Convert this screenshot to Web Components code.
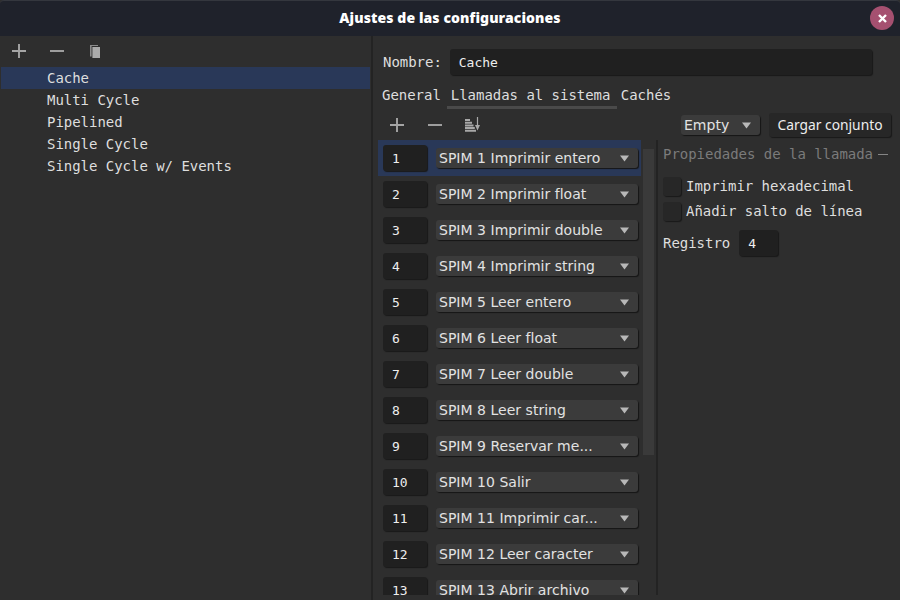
<!DOCTYPE html>
<html lang="es"><head><meta charset="utf-8"><title>Ajustes de las configuraciones</title>
<style>html,body{margin:0;background:#2e2e2e}</style></head><body>
<settings-window></settings-window>
<script>
const base = `*{box-sizing:border-box}`;
function define(name, html) {
  customElements.define(name, class extends HTMLElement {
    constructor() {
      super();
      const t = document.createElement('template');
      t.innerHTML = typeof html === 'function' ? html(this) : html;
      this.attachShadow({mode: 'open'}).append(t.content.cloneNode(true));
    }
  });
}
const icons = {
  plus: '<path d="M7 0V14M0 7H14" stroke="#a5a5a5" stroke-width="1.9"/>',
  minus: '<path d="M0 7H14" stroke="#a5a5a5" stroke-width="1.9"/>',
  copy: '<path d="M2 1H10V2H3.6V12.5H2Z" fill="#8c8c8c"/><rect x="4.4" y="3" width="7.6" height="11" fill="#ababab"/>',
  sort: '<path d="M0 2H5V4H0ZM0 4.7H7V6.7H0ZM0 7.4H8.5V9.4H0ZM0 10.1H9.8V12.1H0ZM0 12.8H11V14.8H0Z" fill="#a8a8a8"/><path d="M12.5 0V10" stroke="#a8a8a8" stroke-width="1.2"/><path d="M10 8H15L12.5 13.5Z" fill="#a8a8a8"/>',
  close: '<path d="M1 1 8 8M8 1 1 8" stroke="#fff" stroke-width="2.4" fill="none"/>'
};
define('ui-icon', el => {
  const n = el.getAttribute('name'), s = n === 'close' ? 9 : n === 'sort' ? 16 : 14;
  return `<style>:host{display:block;width:${s}px;height:${s}px;flex:none}svg{display:block}</style><svg width="${s}" height="${s}" viewBox="0 0 ${s} ${s}">${icons[n]}</svg>`;
});
define('title-bar', `<style>${base}:host{display:grid;grid-template-columns:36px 1fr 36px;align-items:center;height:36px;flex:none;background:#1f222b;border-top:1px solid #34373e;border-radius:4px 4px 0 0;color:#fff;font:bold 14px/20px "Noto Sans",sans-serif;letter-spacing:.09px}
b{grid-column:2;text-align:center;margin-top:-1px}i{display:grid;place-items:center;width:24px;height:24px;border-radius:50%;background:#a55070;margin:-1px 0 0 6px}</style><b><slot></slot></b><i><ui-icon name="close"></ui-icon></i>`);
define('tree-item', `<style>${base}:host{display:block;height:22px;line-height:22px;padding-left:46px;white-space:pre}:host([selected]){background:#293858}</style><slot></slot>`);
define('config-list', `<style>${base}:host{display:flex;flex-direction:column;width:371px;flex:none;padding:0 1px}
nav{display:flex;gap:24px;padding:8px 0 0 11px;height:31px}</style><nav><ui-icon name="plus"></ui-icon><ui-icon name="minus"></ui-icon><ui-icon name="copy"></ui-icon></nav><slot></slot>`);
define('text-field', `<style>${base}:host{display:block;flex:none;height:26px;line-height:27px;padding-left:9px;background:#202020;border-radius:3px;box-shadow:1px 1px 1px #191919;font-size:13px;letter-spacing:-.026px;color:#eee}</style><slot></slot>`);
define('combo-box', `<style>${base}:host{display:flex;flex:none;align-items:center;height:20px;padding:0 9px 0 3px;background:#3b3b3b;border-radius:3px;box-shadow:1px 1px 1px #161616;font:14px/20px "DejaVu Sans",sans-serif;letter-spacing:.02px;color:#e2e2e2;white-space:pre}
span{flex:1}svg{flex:none;margin-top:1px}</style><span><slot></slot></span><svg width="9" height="7"><path d="M0 .5H9L4.5 6.5Z" fill="#b8b8b8"/></svg>`);
define('call-row', el => `<style>${base}:host{display:flex;height:36px;flex:none;padding:5px 0 0 5px}:host([selected]){background:#293858}
text-field{width:44px;margin-right:9px}combo-box{width:202px;margin-top:3px}</style><text-field>${el.getAttribute('n')}</text-field><combo-box><slot></slot></combo-box>`);
define('check-item', `<style>${base}:host{display:flex;align-items:center;height:19px;gap:5px;line-height:19px;white-space:pre}i{width:18px;height:19px;background:#272727;border-radius:3px;box-shadow:1px 1px 1px #191919}</style><i></i><slot></slot>`);
define('call-properties', `<style>${base}:host{display:block;flex:1;padding-left:5px}
h2{display:flex;align-items:center;gap:5px;margin:0 12px 0 0;height:28px;font:inherit;color:#7b7b7b;white-space:pre}h2:after{content:"";width:10px;height:1px;background:#858585}
check-item{margin-top:6px}check-item:first-of-type{margin-top:9px}p{display:flex;align-items:center;gap:9px;margin:9px 0 0;height:26px}text-field{width:39px}</style>
<h2>Propiedades de la llamada</h2><check-item>Imprimir hexadecimal</check-item><check-item>Añadir salto de línea</check-item><p>Registro <text-field>4</text-field></p>`);
const calls = ['1 Imprimir entero','2 Imprimir float','3 Imprimir double','4 Imprimir string','5 Leer entero','6 Leer float','7 Leer double','8 Leer string','9 Reservar me...','10 Salir','11 Imprimir car...','12 Leer caracter','13 Abrir archivo'];
define('call-list', `<style>${base}:host{display:flex;height:455px;overflow:hidden;flex:none;width:280px;border-right:2px solid #232323}
section{width:263px;display:flex;flex-direction:column}i{width:11px;height:306px;margin:9px 0 0 2px;background:#3a3a3a}</style>
<section>${calls.map((c,i)=>`<call-row n="${i+1}"${i?'':' selected'}>SPIM ${c}</call-row>`).join('')}</section><i></i>`);
define('tab-bar', `<style>${base}:host{display:flex;height:29px;padding:4px 0 0 9px}span{line-height:24px;height:25px;white-space:pre}
.on{width:170px;margin-left:6px;padding-left:4px;margin-right:4px;height:29px;position:relative}.on:after{content:"";position:absolute;left:0;right:0;bottom:3px;height:3px;background:#4a4a4a}</style>
<span>General</span><span class="on">Llamadas al sistema</span><span>Cachés</span>`);
define('config-editor', `<style>${base}:host{display:flex;flex-direction:column;flex:1;border-left:2px solid #232323}
.name{display:flex;align-items:center;padding:9px 0 0 10px;height:43px;flex:none}.name text-field{width:422px;margin-left:8px}
.tools{display:flex;height:32px;flex:none;padding:0 8px 0 17px}.tools ui-icon{margin:10px 24px 0 0}.tools ui-icon[name=sort]{margin:9px 200px 0 -1px}
combo-box.set{width:79px;margin:7px 9px 0 0;padding-right:9px}
button{appearance:none;border:0;padding:0;width:122px;height:24px;margin-top:5px;background:#272727;border-radius:3px;box-shadow:1px 1px 1px #191919;color:#eee;font:13.8px/24px "Noto Sans",sans-serif;white-space:pre}
.body{display:flex;padding-left:5px}</style>
<div class="name">Nombre:<text-field>Cache</text-field></div><tab-bar></tab-bar>
<div class="tools"><ui-icon name="plus"></ui-icon><ui-icon name="minus"></ui-icon><ui-icon name="sort"></ui-icon><combo-box class="set">Empty</combo-box><button>Cargar conjunto</button></div>
<div class="body"><call-list></call-list><call-properties></call-properties></div>`);
define('settings-window', `<style>${base}:host{display:flex;flex-direction:column;width:900px;height:600px;overflow:hidden;background:#2e2e2e;color:#dedede;font:14px/20px "DejaVu Sans Mono",monospace;letter-spacing:-.028px}
main{display:flex;flex:1;min-height:0}</style><title-bar>Ajustes de las configuraciones</title-bar><main><config-list><tree-item selected>Cache</tree-item><tree-item>Multi Cycle</tree-item><tree-item>Pipelined</tree-item><tree-item>Single Cycle</tree-item><tree-item>Single Cycle w/ Events</tree-item></config-list><config-editor></config-editor></main>`);
</script></body></html>
